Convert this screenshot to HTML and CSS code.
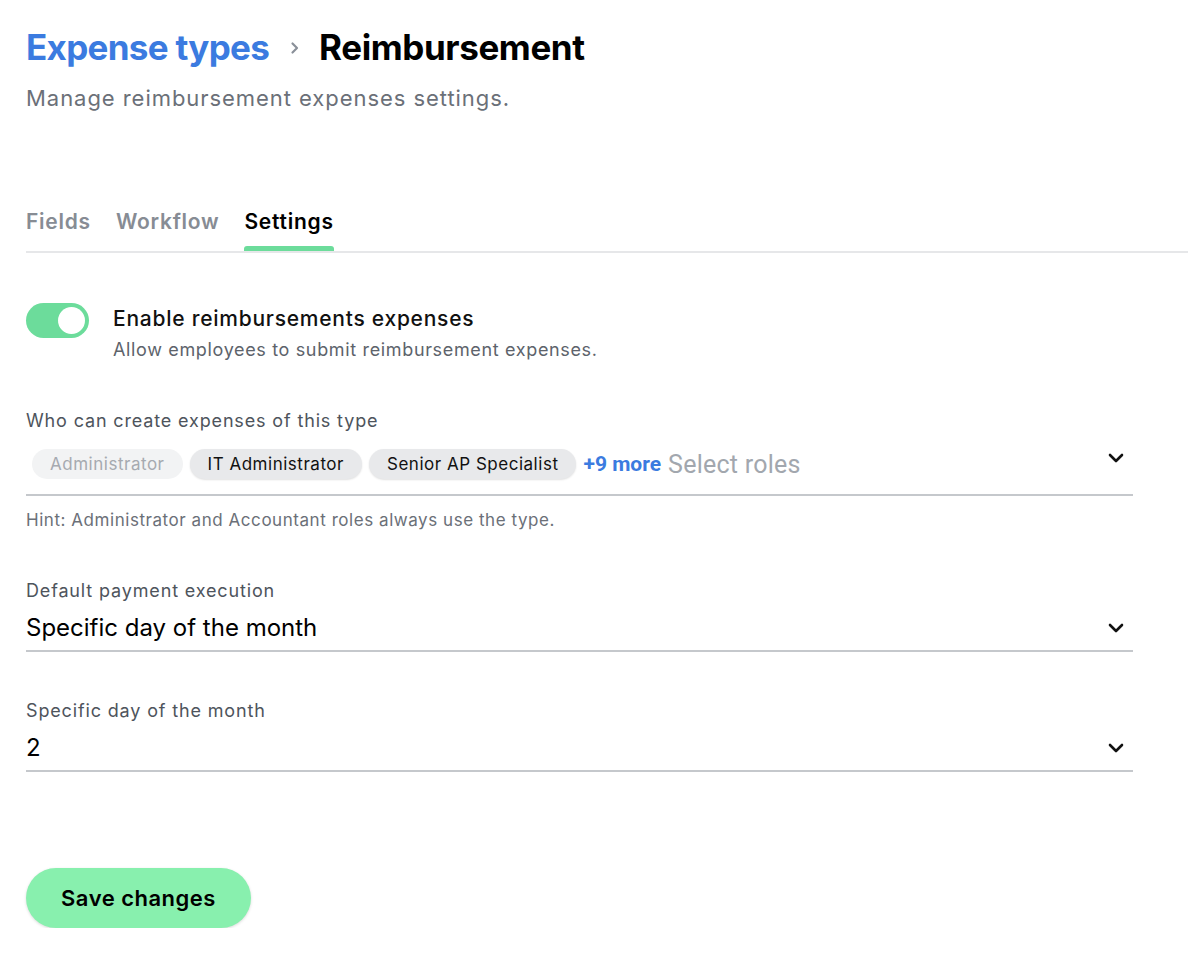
FILE: index.html
```html
<!DOCTYPE html>
<html>
<head>
<meta charset="utf-8">
<link rel="stylesheet" href="styles.css">
</head>
<body>
<main class="page">
  <header class="head">
    <h1 class="crumbs"><span class="crumb-link">Expense types</span><svg class="crumb-sep" width="12" height="14" viewBox="0 0 12 14"><path d="M3.5 2.5l4.5 4.5-4.5 4.5" fill="none" stroke="#8a9099" stroke-width="2.2" stroke-linecap="round" stroke-linejoin="round"/></svg><span class="crumb-current">Reimbursement</span></h1>
    <p class="subtitle">Manage reimbursement expenses settings.</p>
  </header>

  <nav class="tabs">
    <span class="tab">Fields</span>
    <span class="tab">Workflow</span>
    <span class="tab active">Settings</span>
  </nav>

  <section class="toggle-row">
    <span class="switch"><span class="knob"></span></span>
    <div class="toggle-text">
      <div class="toggle-title">Enable reimbursements expenses</div>
      <div class="toggle-sub">Allow employees to submit reimbursement expenses.</div>
    </div>
  </section>

  <section class="field roles-field">
    <label class="label">Who can create expenses of this type</label>
    <div class="select roles">
      <span class="chip disabled">Administrator</span>
      <span class="chip">IT Administrator</span>
      <span class="chip">Senior AP Specialist</span>
      <span class="more">+9 more</span>
      <span class="placeholder">Select roles</span>
      <svg class="chev" width="16" height="10" viewBox="0 0 16 10"><path d="M2 2l6 6 6-6" fill="none" stroke="#111" stroke-width="2.6" stroke-linecap="round" stroke-linejoin="round"/></svg>
    </div>
    <p class="hint">Hint: Administrator and Accountant roles always use the type.</p>
  </section>

  <section class="field">
    <label class="label">Default payment execution</label>
    <div class="select">
      <span class="value">Specific day of the month</span>
      <svg class="chev" width="16" height="10" viewBox="0 0 16 10"><path d="M2 2l6 6 6-6" fill="none" stroke="#111" stroke-width="2.6" stroke-linecap="round" stroke-linejoin="round"/></svg>
    </div>
  </section>

  <section class="field">
    <label class="label">Specific day of the month</label>
    <div class="select">
      <span class="value">2</span>
      <svg class="chev" width="16" height="10" viewBox="0 0 16 10"><path d="M2 2l6 6 6-6" fill="none" stroke="#111" stroke-width="2.6" stroke-linecap="round" stroke-linejoin="round"/></svg>
    </div>
  </section>

  <div class="actions">
    <button class="save">Save changes</button>
  </div>
</main>
</body>
</html>
```

FILE: styles.css
```css
* { box-sizing: border-box; }
html, body { margin: 0; padding: 0; background: #fff; }
body {
  font-family: Inter, "Noto Sans", sans-serif;
  color: #111;
}
.page {
  padding: 24px 0 0 26px;
}
.head { display: flex; flex-direction: column; }
.crumbs {
  margin: 0;
  display: flex;
  align-items: center;
  font-size: 35px;
  font-weight: 700;
  letter-spacing: -0.7px;
  line-height: 46px;
}
.crumb-link { color: #3b7be0; }
.crumb-sep { margin: 2px 18px 0 20px; }
.crumb-current { color: #000; letter-spacing: -0.4px; }
.subtitle {
  margin: 14px 0 0 0;
  font-size: 22px;
  color: #6b7078;
  line-height: 28px;
  letter-spacing: 0.95px;
}
.tabs {
  margin-top: 97px;
  display: flex;
  gap: 25px;
  border-bottom: 2px solid #e6e7e9;
}
.tab {
  display: flex;
  flex-direction: column;
  font-size: 21px;
  font-weight: 600;
  color: #878c94;
  line-height: 26px;
  letter-spacing: 0.75px;
}
.tab::after {
  content: "";
  display: block;
  height: 5px;
  margin-top: 11px;
  border-radius: 3px 3px 0 0;
  background: transparent;
}
.tab.active { color: #000; }
.tab.active::after { background: #6cdc9b; }
.toggle-row {
  margin-top: 50px;
  display: flex;
  align-items: flex-start;
  gap: 24px;
}
.switch {
  width: 63px;
  height: 35px;
  border-radius: 18px;
  background: #6cdc9b;
  display: flex;
  align-items: center;
  justify-content: flex-end;
  padding-right: 4px;
  flex: none;
}
.knob {
  width: 27px;
  height: 27px;
  border-radius: 50%;
  background: #fff;
}
.toggle-title {
  font-size: 21px;
  font-weight: 500;
  line-height: 28px;
  margin-top: 2px;
  letter-spacing: 0.75px;
}
.toggle-sub {
  font-size: 18px;
  color: #5d636b;
  line-height: 24px;
  margin-top: 5px;
  letter-spacing: 0.65px;
}
.field {
  width: 1107px;
  display: flex;
  flex-direction: column;
}
.label {
  font-size: 18px;
  color: #4e545c;
  line-height: 24px;
  letter-spacing: 0.85px;
}
.roles-field { margin-top: 47px; }
.select {
  display: flex;
  align-items: center;
  border-bottom: 2px solid #c5c8cc;
}
.roles {
  margin-top: 15px;
  padding: 0 0 14px 6px;
  gap: 7px;
}
.chip {
  height: 30px;
  border-radius: 15px;
  background: #e8e9eb;
  box-shadow: 0 1px 2px rgba(0,0,0,0.12);
  padding: 0 18px;
  font-size: 17px;
  line-height: 30px;
  color: #111;
  white-space: nowrap;
  letter-spacing: 0.52px;
}
.chip.disabled {
  background: #f2f3f4;
  color: #a6aab0;
  box-shadow: none;
}
.more {
  font-family: Roboto, sans-serif;
  font-weight: 700;
  font-size: 21px;
  line-height: 30px;
  color: #3b7be0;
}
.placeholder {
  font-family: Roboto, sans-serif;
  font-size: 25px;
  line-height: 30px;
  letter-spacing: 0.25px;
  color: #a2a7ae;
  margin-top: 2px;
}
.chev {
  margin-left: auto;
  margin-right: 9px;
  flex: none;
}
.roles .chev { margin-top: -12px; }
.hint {
  margin: 13px 0 0 0;
  font-size: 17px;
  color: #6b7078;
  line-height: 22px;
  letter-spacing: 0.55px;
}
.field + .field { margin-top: 47px; }
.roles-field + .field { margin-top: 48px; }
.field .select:not(.roles) {
  margin-top: 10px;
  padding-bottom: 7px;
}
.value {
  font-size: 24px;
  line-height: 30px;
  color: #000;
}
.actions { margin-top: 96px; }
.save {
  width: 225px;
  height: 60px;
  border: none;
  border-radius: 30px;
  background: #88f0ae;
  box-shadow: 0 1px 3px rgba(0,0,0,0.15);
  font-family: Inter, sans-serif;
  font-size: 22px;
  font-weight: 600;
  color: #000;
  letter-spacing: 0.5px;
}
```
